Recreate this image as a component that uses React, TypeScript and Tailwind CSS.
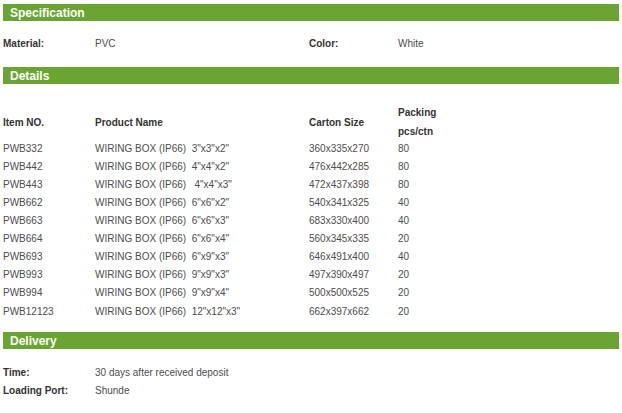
const rows = [
  ['PWB332', 'WIRING BOX (IP66)\u00a0\u00a03"x3"x2"', '360x335x270', '80'],
  ['PWB442', 'WIRING BOX (IP66)\u00a0\u00a04"x4"x2"', '476x442x285', '80'],
  ['PWB443', 'WIRING BOX (IP66)\u00a0\u00a0\u00a04"x4"x3"', '472x437x398', '80'],
  ['PWB662', 'WIRING BOX (IP66)\u00a0\u00a06"x6"x2"', '540x341x325', '40'],
  ['PWB663', 'WIRING BOX (IP66)\u00a0\u00a06"x6"x3"', '683x330x400', '40'],
  ['PWB664', 'WIRING BOX (IP66)\u00a0\u00a06"x6"x4"', '560x345x335', '20'],
  ['PWB693', 'WIRING BOX (IP66)\u00a0\u00a06"x9"x3"', '646x491x400', '40'],
  ['PWB993', 'WIRING BOX (IP66)\u00a0\u00a09"x9"x3"', '497x390x497', '20'],
  ['PWB994', 'WIRING BOX (IP66)\u00a0\u00a09"x9"x4"', '500x500x525', '20'],
  ['PWB12123', 'WIRING BOX (IP66)\u00a0\u00a012"x12"x3"', '662x397x662', '20'],
];

function SectionBar({ title }: { title: string }) {
  return (
    <div className="h-[17px] bg-[#69a530] pl-[7px] flex items-center">
      <span className="text-white font-bold text-[12px] leading-none">{title}</span>
    </div>
  );
}

export default function App() {
  return (
    <div
      className="w-[622px] h-[413px] bg-white px-[3px] pt-[4px] text-[10px] text-[#4d4d4d]"
      style={{ fontFamily: '"Liberation Sans", Arial, sans-serif' }}
    >
      <SectionBar title="Specification" />

      {/* Spec */}
      <div className="mt-[13px] grid grid-cols-[92px_214px_89px_1fr] h-[18px] items-center">
        <span className="font-bold text-[#333]">Material:</span>
        <span>PVC</span>
        <span className="font-bold text-[#333]">Color:</span>
        <span>White</span>
      </div>

      <div className="mt-[15px]">
        <SectionBar title="Details" />
      </div>

      {/* Table */}
      <div className="mt-[19px]">
        <div className="grid grid-cols-[92px_214px_89px_1fr] items-center font-bold text-[#333]">
          <span>Item NO.</span>
          <span>Product Name</span>
          <span>Carton Size</span>
          <div className="flex flex-col leading-[19px]">
            <span>Packing</span>
            <span>pcs/ctn</span>
          </div>
        </div>
        <div className="-mt-[2px]">
          {rows.map((r, i) => (
            <div
              key={r[0]}
              className={`grid grid-cols-[92px_214px_89px_1fr] items-center ${i === rows.length - 1 ? 'h-[20px] pt-[1px]' : 'h-[18px]'}`}
            >
              <span>{r[0]}</span>
              <span>{r[1]}</span>
              <span>{r[2]}</span>
              <span>{r[3]}</span>
            </div>
          ))}
        </div>
      </div>

      <div className="mt-[11px]">
        <SectionBar title="Delivery" />
      </div>

      <div className="mt-[14px]">
        <div className="grid grid-cols-[92px_1fr] h-[18px] items-center">
          <span className="font-bold text-[#333]">Time:</span>
          <span>30 days after received deposit</span>
        </div>
        <div className="grid grid-cols-[92px_1fr] h-[18px] items-center">
          <span className="font-bold text-[#333]">Loading Port:</span>
          <span>Shunde</span>
        </div>
      </div>
    </div>
  );
}
